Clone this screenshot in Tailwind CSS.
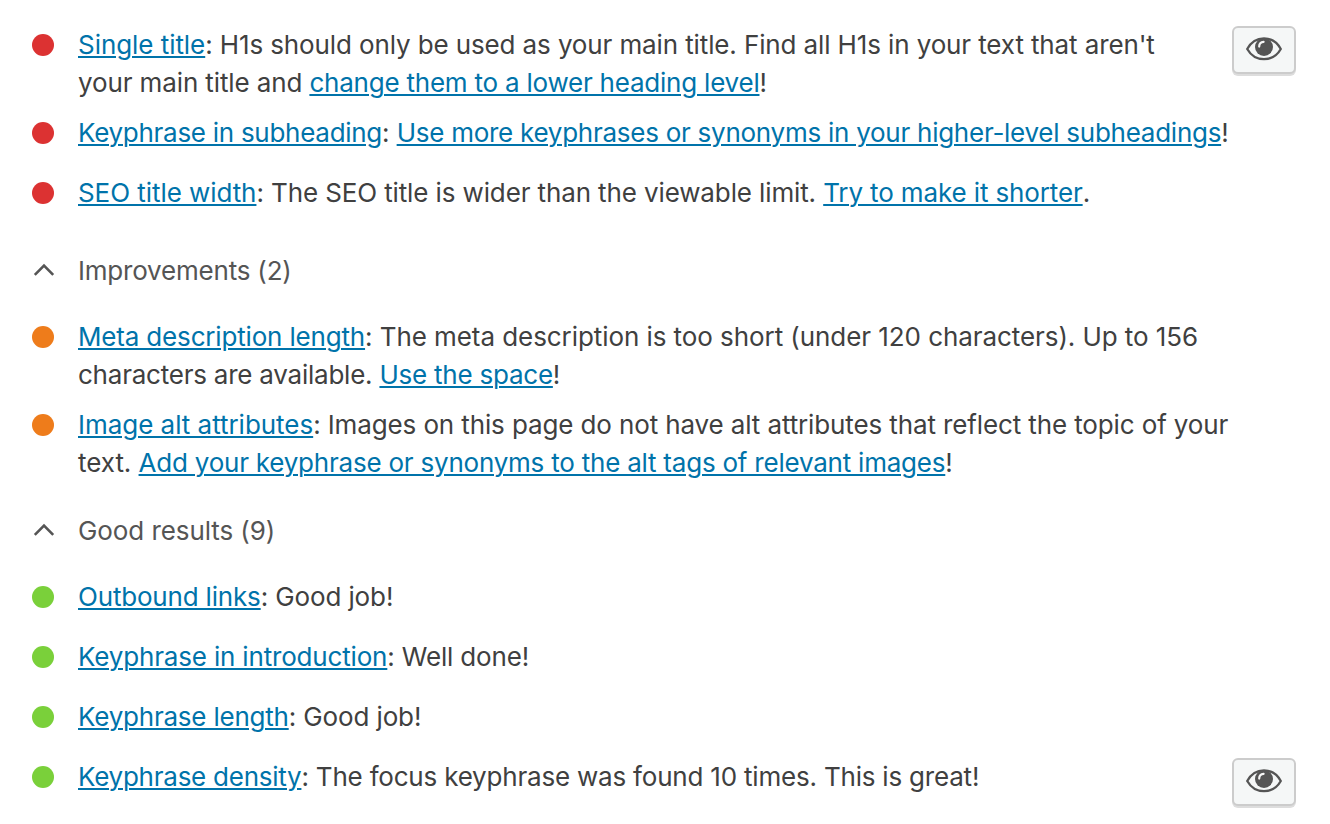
<!DOCTYPE html>
<html lang="en">
<head>
  <meta charset="UTF-8" />
  <meta name="viewport" content="width=device-width, initial-scale=1.0"/>
  <title>SEO analysis</title>
  <script src="https://cdn.jsdelivr.net/npm/@tailwindcss/browser@4"></script>
</head>
<body class="min-h-screen bg-white font-['Inter',sans-serif] text-[26px] leading-[38px] text-[#404040] tracking-[-0.12px]">

<!-- eye icon used by the highlight buttons -->
<svg class="hidden">
  <symbol id="eye" viewBox="0 0 36 24">
    <path d="M1.2 12C9 -2.2 27 -2.2 34.8 12C27 25.6 9 25.6 1.2 12Z" fill="none" stroke="#555" stroke-width="2.3" stroke-linejoin="round"/>
    <circle cx="18" cy="10" r="9" fill="#555"/>
    <path d="M13.2 9.6C13.2 7 14.8 5.1 17.6 4.9" fill="none" stroke="#f7f7f7" stroke-width="2.2" stroke-linecap="round"/>
  </symbol>
</svg>

<main class="pt-[26px] pl-8 pr-[34px] pb-[18px]">
  <ul class="flex flex-col gap-3">
    <li class="flex min-h-12 items-start">
      <span class="mt-2 mr-6 size-[22px] shrink-0 rounded-full bg-[#dc3232]"></span>
      <p class="flex-1 whitespace-nowrap"><a href="#" class="text-[#0073aa] underline decoration-2 underline-offset-2 tracking-[-0.05px]">Single title</a>: H1s should only be used as your main title. Find all H1s in your text that aren't<br>your main title and <a href="#" class="text-[#0073aa] underline decoration-2 underline-offset-2 tracking-[-0.22px]">change them to a lower heading level</a>!</p>
      <button class="flex h-12 w-16 shrink-0 items-center justify-center rounded-md border-2 border-[#ccc] bg-[#f5f7f7] pb-0.5 shadow-[0_2px_0_#ddd]"><svg class="h-6 w-9"><use href="#eye"/></svg></button>
    </li>
    <li class="flex min-h-12 items-start">
      <span class="mt-2 mr-6 size-[22px] shrink-0 rounded-full bg-[#dc3232]"></span>
      <p class="whitespace-nowrap"><a href="#" class="text-[#0073aa] underline decoration-2 underline-offset-2 tracking-[-0.28px]">Keyphrase in subheading</a>: <a href="#" class="text-[#0073aa] underline decoration-2 underline-offset-2 tracking-[-0.26px]">Use more keyphrases or synonyms in your higher-level subheadings</a>!</p>
    </li>
    <li class="flex min-h-12 items-start">
      <span class="mt-2 mr-6 size-[22px] shrink-0 rounded-full bg-[#dc3232]"></span>
      <p class="whitespace-nowrap"><a href="#" class="text-[#0073aa] underline decoration-2 underline-offset-2 tracking-[-0.06px]">SEO title width</a>: The SEO title is wider than the viewable limit. <a href="#" class="text-[#0073aa] underline decoration-2 underline-offset-2 tracking-[-0.13px]">Try to make it shorter</a>.</p>
    </li>
  </ul>

  <h3 class="flex h-24 items-center text-[#555]">
    <svg class="mr-[22px] h-6 w-6" viewBox="0 0 24 24" fill="none" stroke="#555" stroke-width="2.6"><path d="M2.8 16.8L12 7.6L21.2 16.8"/></svg>
    <span class="pt-0.5 tracking-[-0.2px]">Improvements (2)</span>
  </h3>

  <ul class="flex flex-col gap-3">
    <li class="flex min-h-12 items-start">
      <span class="mt-2 mr-6 size-[22px] shrink-0 rounded-full bg-[#ee7c1b]"></span>
      <p class="whitespace-nowrap"><a href="#" class="text-[#0073aa] underline decoration-2 underline-offset-2 tracking-[-0.17px]">Meta description length</a><span class="tracking-[-0.07px]">: The meta description is too short (under 120 characters). Up to 156</span><br><span class="tracking-[-0.23px]">characters are available. <a href="#" class="text-[#0073aa] underline decoration-2 underline-offset-2">Use the space</a>!</span></p>
    </li>
    <li class="flex min-h-12 items-start">
      <span class="mt-2 mr-6 size-[22px] shrink-0 rounded-full bg-[#ee7c1b]"></span>
      <p class="whitespace-nowrap"><a href="#" class="text-[#0073aa] underline decoration-2 underline-offset-2 tracking-[-0.03px]">Image alt attributes</a>: Images on this page do not have alt attributes that reflect the topic of your<br><span class="tracking-[-0.05px]">text. </span><a href="#" class="text-[#0073aa] underline decoration-2 underline-offset-2 tracking-[-0.22px]">Add your keyphrase or synonyms to the alt tags of relevant images</a>!</p>
    </li>
  </ul>

  <h3 class="flex h-24 items-center text-[#555]">
    <svg class="mr-[22px] h-6 w-6" viewBox="0 0 24 24" fill="none" stroke="#555" stroke-width="2.6"><path d="M2.8 16.8L12 7.6L21.2 16.8"/></svg>
    <span class="pt-0.5 tracking-[-0.08px]">Good results (9)</span>
  </h3>

  <ul class="flex flex-col gap-3">
    <li class="flex min-h-12 items-start">
      <span class="mt-2 mr-6 size-[22px] shrink-0 rounded-full bg-[#7ad03a]"></span>
      <p class="whitespace-nowrap"><a href="#" class="text-[#0073aa] underline decoration-2 underline-offset-2 tracking-[-0.18px]">Outbound links</a>: Good job!</p>
    </li>
    <li class="flex min-h-12 items-start">
      <span class="mt-2 mr-6 size-[22px] shrink-0 rounded-full bg-[#7ad03a]"></span>
      <p class="whitespace-nowrap tracking-[-0.17px]"><a href="#" class="text-[#0073aa] underline decoration-2 underline-offset-2">Keyphrase in introduction</a>: Well done!</p>
    </li>
    <li class="flex min-h-12 items-start">
      <span class="mt-2 mr-6 size-[22px] shrink-0 rounded-full bg-[#7ad03a]"></span>
      <p class="whitespace-nowrap"><a href="#" class="text-[#0073aa] underline decoration-2 underline-offset-2 tracking-[-0.22px]">Keyphrase length</a>: Good job!</p>
    </li>
    <li class="flex min-h-12 items-start">
      <span class="mt-2 mr-6 size-[22px] shrink-0 rounded-full bg-[#7ad03a]"></span>
      <p class="flex-1 whitespace-nowrap tracking-[-0.2px]"><a href="#" class="text-[#0073aa] underline decoration-2 underline-offset-2 tracking-[-0.25px]">Keyphrase density</a>: The focus keyphrase was found 10 times. This is great!</p>
      <button class="flex h-12 w-16 shrink-0 items-center justify-center rounded-md border-2 border-[#ccc] bg-[#f5f7f7] pb-0.5 shadow-[0_2px_0_#ddd]"><svg class="h-6 w-9"><use href="#eye"/></svg></button>
    </li>
  </ul>
</main>

</body>
</html>
